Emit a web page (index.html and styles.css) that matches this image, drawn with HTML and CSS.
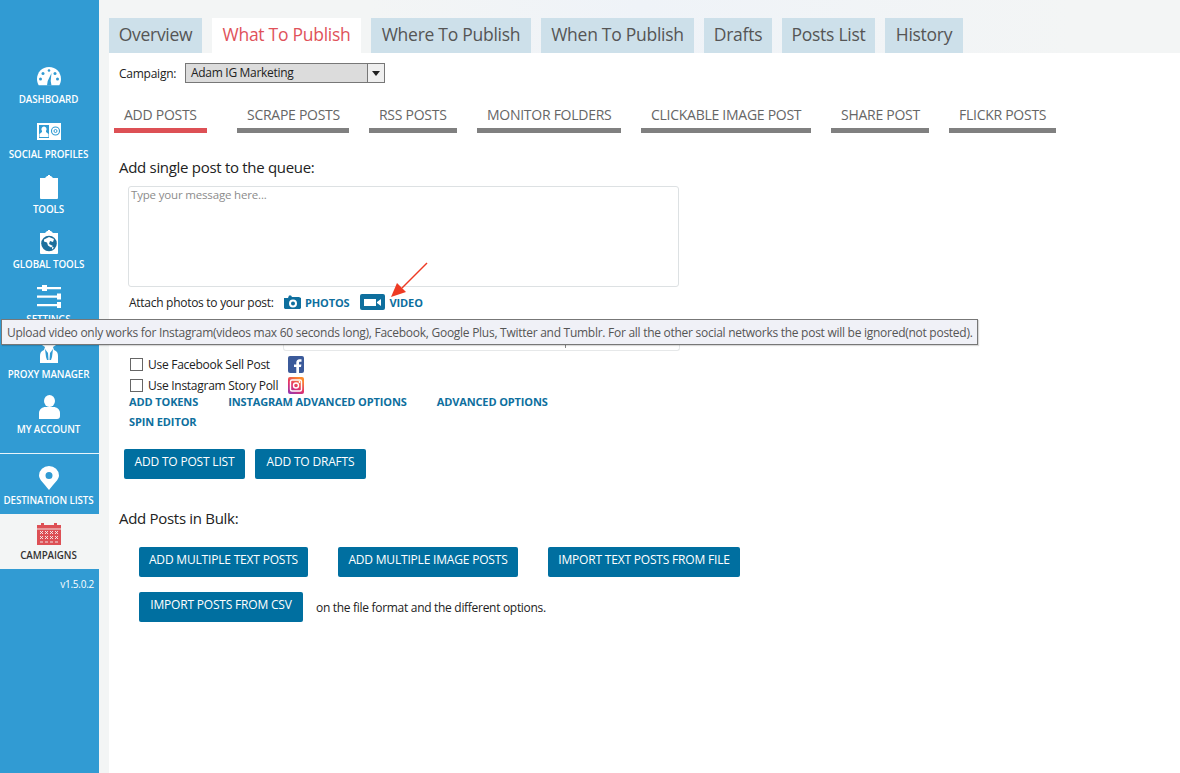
FILE: index.html
```html
<!DOCTYPE html>
<html lang="en">
<head>
<meta charset="utf-8">
<title>What To Publish</title>
<link rel="stylesheet" href="styles.css">
</head>
<body>
<div class="app">
  <nav class="sidebar">
    <a class="nav-item"><svg class="nav-icon" viewBox="0 0 26 24"><path fill="#fff" d="M13 2C6 2 1 7.500 1 14c0 2.300.6 4.300 1.700 6.200h20.600C24.400 18.300 25 16.300 25 14 25 7.500 20 2 13 2z"/><g fill="#319bd3"><circle cx="4.500" cy="14" r="1.500"/><circle cx="7" cy="8.500" r="1.500"/><circle cx="13" cy="5.500" r="1.300"/><circle cx="19" cy="8.500" r="1.500"/><circle cx="21.500" cy="14" r="1.500"/><path d="M15.500 8l-.8 8 .8 4.500h-4.500l.7-4.500z"/></g></svg><span>DASHBOARD</span></a>
    <a class="nav-item"><svg class="nav-icon" viewBox="1 0 26 24"><path fill="#fff" d="M2 3h24v17H2z"/><path fill="#319bd3" d="M4 5h10v13H4zM5 20h4l-2 2.500zM20 20h4l-2 2.500z"/><path fill="#fff" d="M9 6.500a2.500 2.800 0 0 1 2 4.600V12l2.500 2v3H4.500v-3L7 12v-.9a2.500 2.800 0 0 1 2-4.600z"/><circle cx="20.500" cy="11" r="4" fill="none" stroke="#319bd3" stroke-width="1.100"/><circle cx="20.500" cy="11" r="1.500" fill="none" stroke="#319bd3"/></svg><span>SOCIAL PROFILES</span></a>
    <a class="nav-item"><svg class="nav-icon" viewBox="1 -1 26 24"><path fill="#fff" d="M5 2h5l2-2h1V-1h2V0h1l2 2h5v20a1 1 0 0 1-1 1H6a1 1 0 0 1-1-1z"/></svg><span>TOOLS</span></a>
    <a class="nav-item"><svg class="nav-icon" viewBox="1 -1 26 24"><path fill="#fff" d="M5 2h5l2-2h1V-1h2V0h1l2 2h5v20a1 1 0 0 1-1 1H6a1 1 0 0 1-1-1z"/><circle cx="14" cy="12.500" r="7.800" fill="#1d6f9c"/><path fill="#fff" d="M9 8.500l5-2.500 5 2-1 3-3-1-1 3 4 2-2 1.500-3-2-1-3-3-1zM17 16l2 .5-2 2z"/></svg><span>GLOBAL TOOLS</span></a>
    <a class="nav-item"><svg class="nav-icon" viewBox="1 0 26 24"><path fill="#fff" d="M2 2h24v2.200H2zM2 10.500h24v2.200H2zM2 19h24v2.200H2z"/><path fill="#fff" d="M7 0h5v6H7zM22 8.500h4v6h-4zM22 17h4v6h-4z"/></svg><span>SETTINGS</span></a>
    <a class="nav-item"><svg class="nav-icon" viewBox="1 0 26 24"><path fill="#fff" d="M7 0h14v5l-3 2 1 3c3 1 4 3 4 6v7H5v-7c0-3 1-5 4-6l1-3-3-2z"/><path fill="#319bd3" d="M10 9l3 4 .5 7H12l-1-3zM18 9l-3 4-.5 7H16l1-3z"/></svg><span>PROXY MANAGER</span></a>
    <a class="nav-item"><svg class="nav-icon" viewBox="1 0 26 24"><ellipse cx="14.500" cy="6" rx="5.500" ry="6" fill="#fff"/><path fill="#fff" d="M4 24v-6c0-4 4-6 6-6h9c2 0 6 2 6 6v3a3 3 0 0 1-3 3z"/></svg><span>MY ACCOUNT</span></a>
    <div class="nav-rule"></div>
    <a class="nav-item"><svg class="nav-icon" viewBox="1 0 26 24"><path fill="#fff" fill-rule="evenodd" d="M14 24C9 17.500 4 13.500 4 9.500a10 9.500 0 0 1 20 0C24 13.500 19 17.500 14 24zM14 6a3.500 3.500 0 1 0 0 7 3.500 3.500 0 0 0 0-7z"/></svg><span>DESTINATION LISTS</span></a>
    <a class="nav-item nav-active"><svg class="nav-icon" viewBox="1 0 26 24"><path fill="#dd5055" d="M2 4h4V2h3v2h10V2h3v2h4v20H2z"/><path stroke="#f3f5f5" stroke-width=".9" fill="none" d="M2 8h24M5 10l3 3m0-3l-3 3M10 10l3 3m0-3l-3 3M15 10l3 3m0-3l-3 3M20 10l3 3m0-3l-3 3M5 15l3 3m0-3l-3 3M10 15l3 3m0-3l-3 3M15 15l3 3m0-3l-3 3M20 15l3 3m0-3l-3 3M5 21h3M10 21h3M15 21h3M20 21h3"/></svg><span>CAMPAIGNS</span></a>
    <div class="version">v1.5.0.2</div>
  </nav>

  <main class="main">
    <div class="tabs">
      <a class="tab">Overview</a>
      <a class="tab tab-active">What To Publish</a>
      <a class="tab">Where To Publish</a>
      <a class="tab">When To Publish</a>
      <a class="tab">Drafts</a>
      <a class="tab">Posts List</a>
      <a class="tab">History</a>
    </div>
    <div class="panel">
      <div class="campaign">
        <span class="campaign-label">Campaign:</span>
        <div class="select"><span class="select-value">Adam IG Marketing</span><span class="select-btn"><i></i></span></div>
      </div>
      <div class="subtabs">
        <a class="subtab subtab-active">ADD POSTS</a>
        <a class="subtab">SCRAPE POSTS</a>
        <a class="subtab">RSS POSTS</a>
        <a class="subtab">MONITOR FOLDERS</a>
        <a class="subtab">CLICKABLE IMAGE POST</a>
        <a class="subtab">SHARE POST</a>
        <a class="subtab">FLICKR POSTS</a>
      </div>
      <h2 class="heading">Add single post to the queue:</h2>
      <div class="message">Type your message here...</div>
      <div class="attach">
        <span class="attach-label">Attach photos to your post:</span>
        <a class="link photos"><svg class="cam" viewBox="0 0 17 14"><path fill="#0e6f9e" fill-rule="evenodd" d="M0 3h4l1-2.500h2L8 2h7l2 1v10l-1 1H1l-1-1zM9 4.500a4 4 0 1 0 0 8 4 4 0 0 0 0-8zM9 6.500a2 2 0 1 1 0 4 2 2 0 0 1 0-4z"/></svg>PHOTOS</a>
        <a class="link video"><svg class="cam-video" viewBox="0 0 25 16"><rect width="25" height="16" rx="2" fill="#0e6f9e"/><path fill="#fff" d="M4 5h12v7H4zM17 8l4-3v7l-4-3z"/></svg>VIDEO</a>
      </div>
      <div class="hidden-field"><span class="hidden-mark"></span></div>
      <label class="check"><span class="box"></span>Use Facebook Sell Post<svg class="social fb" viewBox="0 0 16 17"><rect width="16" height="17" rx="2" fill="#3b5a9a"/><path fill="#fff" d="M11 17v-6h2l.4-2.500H11V7c0-.8.300-1.200 1.200-1.200h1.300V3.300c-.5 0-1.200-.1-2-.1C9.500 3.200 8.300 4.500 8.300 6.600v1.900H6V11h2.300v6z"/></svg></label>
      <label class="check"><span class="box"></span>Use Instagram Story Poll<svg class="social ig" viewBox="0 0 16 17"><defs><linearGradient id="ig" x1="0" y1="1" x2="0.600" y2="0"><stop offset="0" stop-color="#8a3ab9"/><stop offset=".5" stop-color="#e1306c"/><stop offset="1" stop-color="#fd8a2c"/></linearGradient></defs><rect width="16" height="17" rx="2" fill="url(#ig)"/><rect x="2.500" y="3" width="11" height="11" rx="1.500" fill="none" stroke="#fff" stroke-width="1.400"/><circle cx="8" cy="8.500" r="2.500" fill="none" stroke="#fff" stroke-width="1.400"/><circle cx="11.500" cy="5" r=".9" fill="#fff"/></svg></label>
      <div class="links">
        <a class="link">ADD TOKENS</a>
        <a class="link">INSTAGRAM ADVANCED OPTIONS</a>
        <a class="link">ADVANCED OPTIONS</a>
      </div>
      <div class="links links-second"><a class="link">SPIN EDITOR</a></div>
      <div class="actions">
        <a class="btn">ADD TO POST LIST</a>
        <a class="btn">ADD TO DRAFTS</a>
      </div>
      <h2 class="heading heading-bulk">Add Posts in Bulk:</h2>
      <div class="bulk">
        <a class="btn">ADD MULTIPLE TEXT POSTS</a>
        <a class="btn">ADD MULTIPLE IMAGE POSTS</a>
        <a class="btn">IMPORT TEXT POSTS FROM FILE</a>
      </div>
      <div class="bulk-csv">
        <a class="btn">IMPORT POSTS FROM CSV</a>
        <span>on the file format and the different options.</span>
      </div>
    </div>
  </main>
</div>
<svg class="arrow" viewBox="0 0 44 44"><path fill="none" stroke="#ee3b24" stroke-width="1.500" d="M41 2L16 27"/><path fill="#ee3b24" d="M5 36l6-14 9 9z"/></svg>
<div class="tooltip">Upload video only works for Instagram(videos max 60 seconds long), Facebook, Google Plus, Twitter and Tumblr. For all the other social networks the post will be ignored(not posted).</div>
</body>
</html>
```
FILE: styles.css
```css
* { box-sizing: border-box; }
html, body { margin: 0; height: 100%; overflow: hidden; }
body {
  font-family: "Open Sans", "Noto Sans", sans-serif;
  background: #f3f5f5;
  color: #222;
}
.app { display: flex; height: 773px; }
.sidebar {
  width: 99px;
  flex: none;
  background: #319bd3;
  padding-top: 65px;
  color: #fff;
}
.nav-item {
  display: flex;
  flex-direction: column;
  align-items: center;
  height: 55px;
  padding-right: 2px;
  font-size: 9.800px;
  font-weight: 600;
  letter-spacing: -0.100px;
  white-space: nowrap;
}
.nav-item span { line-height: 13px; margin-top: 4px; }
.nav-icon { width: 26px; height: 24px; display: block; flex: none; }
.nav-rule { height: 1px; background: #e8f4fa; margin: 3px 0 5px; }
.nav-active { background: #f3f5f5; color: #333; padding-top: 7px; }
.sidebar .nav-item:nth-of-type(8) { padding-top: 7px; }
.version { text-align: right; font-size: 10px; padding: 8px 5px 0 0; letter-spacing: -0.250px; }
.main { flex: 1; padding: 18px 0 0 10px; background: linear-gradient(90deg, #f3f5f5 25%, #eff3f8 50%, #f3f5f5 90%); }
.tabs { display: flex; gap: 10px; height: 35px; }
.tab {
  display: flex;
  align-items: center;
  justify-content: center;
  background: #cde0ea;
  color: #555;
  font-size: 17.500px;
  letter-spacing: -0.270px;
  padding: 0 9px 3px;
}
.tab:nth-child(1) { width: 93px; }
.tab:nth-child(2) { width: 149px; }
.tab:nth-child(3) { width: 160px; }
.tab:nth-child(4) { width: 153px; }
.tab:nth-child(5) { width: 68px; }
.tab:nth-child(6) { width: 93px; }
.tab:nth-child(7) { width: 78px; }
.tab-active { background: #fff; color: #e0525a; }
.panel { background: #fff; height: 720px; padding: 10px 0 0 5px; font-size: 12px; }
.campaign { display: flex; align-items: center; gap: 10px; height: 20px; padding-left: 5px; letter-spacing: -0.250px; }
.campaign-label { width: 56px; white-space: nowrap; }
.select {
  display: flex;
  width: 200px;
  height: 20px;
  background: #dcdcdc;
  border: 1px solid #777;
}
.select-value { flex: 1; padding-left: 5px; line-height: 18px; letter-spacing: -0.300px; }
.select-btn { width: 17px; background: #efefef; border-left: 1px solid #777; display: flex; align-items: center; justify-content: center; }
.select-btn i { border: 4px solid transparent; border-top: 5px solid #222; border-bottom: 0; }
.subtabs { display: flex; gap: 20px; margin-top: 19px; }
.subtab {
  display: block;
  height: 31px;
  padding: 4px 10px 0;
  color: #666;
  font-size: 14px;
  letter-spacing: -0.270px;
  line-height: 18px;
  border-bottom: 5px solid #808080;
  white-space: nowrap;
}
.subtab:nth-child(1) { width: 93px; margin-right: 10px; }
.subtab:nth-child(2) { width: 112px; }
.subtab:nth-child(3) { width: 88px; }
.subtab:nth-child(4) { width: 144px; }
.subtab:nth-child(5) { width: 170px; }
.subtab:nth-child(6) { width: 98px; }
.subtab:nth-child(7) { width: 107px; }
.subtab-active { border-bottom-color: #dd5055; }
.heading { margin: 24px 0 0 5px; font-size: 15px; line-height: 20px; font-weight: 400; color: #222; letter-spacing: -0.300px; }
.message {
  margin: 9px 0 0 14px;
  width: 551px;
  height: 101px;
  border: 1px solid #dde1e3;
  border-radius: 3px;
  padding: 0 2px;
  color: #8c8c8c;
  font-size: 11.500px;
  letter-spacing: -0.170px;
  line-height: 15px;
}
.attach { display: flex; align-items: center; height: 16px; margin: 7px 0 0 15px; letter-spacing: -0.280px; }
.attach-label { width: 145px; white-space: nowrap; }
.link { color: #0e6f9e; font-size: 11px; font-weight: 700; letter-spacing: -0.120px; white-space: nowrap; }
.photos { display: flex; align-items: center; margin-left: 10px; }
.video { display: flex; align-items: center; margin-left: 10px; }
.cam { width: 17px; height: 14px; margin-right: 4px; }
.cam-video { width: 25px; height: 16px; margin-right: 5px; }
.hidden-field { margin: 19px 0 0 169px; width: 397px; height: 22px; padding: 16px 0 0 281px; border: 1px solid #e6e8e9; border-top: 0; border-radius: 0 0 3px 3px; }
.hidden-mark { display: block; width: 1px; height: 3px; background: #888; }
.check { display: flex; align-items: center; height: 21px; padding-left: 16px; letter-spacing: -0.270px; white-space: nowrap; }
.check:first-of-type { margin-top: 3px; }
.box { width: 13px; height: 13px; border: 1px solid #666; margin-right: 5px; background: #fff; flex: none; }
.social { width: 16px; height: 17px; }
.fb { margin-left: 18px; }
.ig { margin-left: 10px; }
.links { display: flex; gap: 30px; margin: -2px 0 0 15px; height: 14px; align-items: center; }
.links-second { margin-top: 6px; }
.actions { display: flex; gap: 10px; margin: 21px 0 0 10px; }
.btn {
  display: flex;
  align-items: center;
  justify-content: center;
  height: 30px;
  padding: 0 5px 5px;
  background: #006fa0;
  border-radius: 2px;
  color: #fff;
  font-size: 12px;
  letter-spacing: -0.190px;
  white-space: nowrap;
}
.actions .btn:nth-child(1) { width: 121px; }
.actions .btn:nth-child(2) { width: 111px; }
.heading-bulk { margin-top: 29px; }
.bulk { display: flex; gap: 30px; margin: 19px 0 0 25px; }
.bulk .btn:nth-child(1) { width: 169px; }
.bulk .btn:nth-child(2) { width: 180px; }
.bulk .btn:nth-child(3) { width: 192px; }
.bulk-csv { display: flex; align-items: center; gap: 13px; margin: 15px 0 0 25px; letter-spacing: -0.300px; }
.bulk-csv .btn { width: 164px; }
.arrow { position: absolute; left: 386px; top: 261px; width: 44px; height: 44px; }
.tooltip {
  position: absolute;
  left: 1px;
  top: 319px;
  width: 977px;
  height: 26px;
  background: #f0f1f7;
  border: 1px solid #777;
  color: #555;
  font-size: 12px;
  line-height: 25px;
  padding-left: 5px;
  letter-spacing: -0.270px;
  white-space: nowrap;
  box-shadow: 1px 1px 1px rgba(0,0,0,.15);
}
```
